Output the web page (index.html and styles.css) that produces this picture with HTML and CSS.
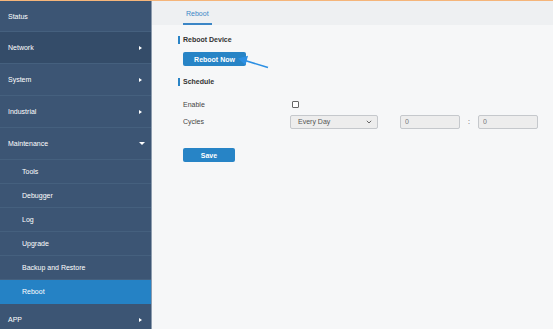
FILE: index.html
```html
<!DOCTYPE html>
<html lang="en">

<head>
    <meta charset="UTF-8">
    <link rel="stylesheet" href="styles.css">
    <title>Maintenance - Reboot</title>
</head>

<body>
    <div class="top-line"></div>

    <div class="layout">
        <aside class="sidebar">
            <ul class="menu">
                <li class="menu-item first">Status</li>
                <li class="menu-item hover has-sub">Network</li>
                <li class="menu-item has-sub">System</li>
                <li class="menu-item has-sub">Industrial</li>
                <li class="menu-item has-sub open">Maintenance</li>
                <li class="sub-item">Tools</li>
                <li class="sub-item">Debugger</li>
                <li class="sub-item">Log</li>
                <li class="sub-item">Upgrade</li>
                <li class="sub-item">Backup and Restore</li>
                <li class="sub-item active">Reboot</li>
                <li class="menu-item has-sub">APP</li>
            </ul>
        </aside>

        <main class="content">
            <div class="tabs">
                <span class="tab active">Reboot</span>
            </div>

            <div class="panel">
                <h2 class="section-title">Reboot Device</h2>
                <button class="btn" type="button">Reboot Now</button>

                <!-- callout arrow pointing at the button -->
                <svg class="callout" width="40" height="20" viewBox="0 0 40 20">
                    <line x1="36" y1="15.5" x2="13" y2="8.5" stroke="#2b8fe3" stroke-width="1.6" />
                    <polygon points="6,6.5 16,3.8 13.5,13" fill="#2b8fe3" />
                </svg>

                <h2 class="section-title schedule">Schedule</h2>

                <form class="schedule-form">
                    <div class="form-row">
                        <label for="enable">Enable</label>
                        <input type="checkbox" id="enable" class="check">
                    </div>
                    <div class="form-row">
                        <label>Cycles</label>
                        <div class="select-box">
                            <span>Every Day</span>
                            <svg width="6" height="4" viewBox="0 0 6 4">
                                <polyline points="0.8,0.8 3,3 5.2,0.8" fill="none" stroke="#666" stroke-width="1" />
                            </svg>
                        </div>
                        <input type="text" class="time-input first-input" value="0">
                        <span class="colon">:</span>
                        <input type="text" class="time-input" value="0">
                    </div>
                    <button class="btn save" type="button">Save</button>
                </form>
            </div>
        </main>
    </div>
</body>

</html>
```

FILE: styles.css
```css
html,
body {
    margin: 0;
    padding: 0;
    height: 100%;
}

body {
    font-family: "Liberation Sans", Arial, sans-serif;
    font-size: 7px;
    background-color: #f6f7f8;
    overflow: hidden;
}

.top-line {
    height: 1px;
    background-color: #f5b57a;
}

.layout {
    display: flex;
    height: 328px;
}

.sidebar {
    width: 151px;
    background-color: #3c5574;
    border-right: 1px solid #8d9cae;
    flex-shrink: 0;
}

.menu {
    list-style: none;
    margin: 0;
    padding: 0;
}

.menu-item {
    height: 32px;
    box-sizing: border-box;
    border-bottom: 1px solid #45607e;
    color: #fff;
    padding: 0 9px 0 8px;
    display: flex;
    align-items: center;
    justify-content: space-between;
}

.menu-item.first {
    height: 31px;
}

.menu-item.hover {
    background-color: #344c69;
}

.has-sub::after {
    content: "";
    width: 0;
    height: 0;
    border-top: 2.5px solid transparent;
    border-bottom: 2.5px solid transparent;
    border-left: 3px solid #fff;
}

.has-sub.open::after {
    border-left: 3px solid transparent;
    border-right: 3px solid transparent;
    border-top: 3px solid #fff;
    border-bottom: none;
    margin-right: -3px;
}

.sub-item {
    height: 24px;
    box-sizing: border-box;
    border-bottom: 1px solid #45607e;
    color: #fff;
    padding-left: 22px;
    display: flex;
    align-items: center;
}

.sub-item.active {
    background-color: #2582c5;
    border-bottom-color: #2582c5;
}

.content {
    flex: 1;
    display: flex;
    flex-direction: column;
}

.tabs {
    height: 24px;
    background-color: #eef0f2;
    display: flex;
    padding-left: 31px;
}

.tab {
    color: #3b86c6;
    padding: 0 3px;
    display: flex;
    align-items: center;
    border-bottom: 2px solid transparent;
    padding-top: 2px;
}

.tab.active {
    border-bottom-color: #3b86c6;
}

.panel {
    position: relative;
    padding: 11px 0 0 26px;
}

.section-title {
    margin: 0;
    font-size: 7px;
    line-height: 8px;
    font-weight: bold;
    color: #333;
    border-left: 2px solid #2a84c6;
    padding-left: 3px;
}

.section-title.schedule {
    margin-top: 12px;
}

.btn {
    display: block;
    font-family: inherit;
    font-size: 7px;
    font-weight: bold;
    color: #fff;
    background-color: #2784c6;
    border: none;
    border-radius: 2px;
    height: 14px;
    width: 63px;
    padding: 0;
    margin: 8px 0 0 5px;
}

.callout {
    position: absolute;
    left: 80px;
    top: 27px;
}

.schedule-form {
    margin: 10px 0 0 5px;
}

.form-row {
    height: 17px;
    display: flex;
    align-items: center;
}

.form-row label {
    width: 107px;
    color: #444;
}

.check {
    appearance: none;
    width: 7px;
    height: 7px;
    margin: 0 0 0 2px;
    border: 1px solid #666;
    border-radius: 1px;
    background-color: #fff;
}

.select-box {
    width: 88px;
    height: 14px;
    box-sizing: border-box;
    border: 1px solid #c5c8cc;
    border-radius: 2px;
    background-color: #ededed;
    color: #555;
    display: flex;
    align-items: center;
    justify-content: space-between;
    padding: 0 5px 0 7px;
}

.time-input {
    width: 60px;
    height: 14px;
    box-sizing: border-box;
    border: 1px solid #c5c8cc;
    border-radius: 2px;
    background-color: #ededed;
    color: #777;
    font-family: inherit;
    font-size: 7px;
    padding: 0 4px;
    margin: 0;
}

.first-input {
    margin-left: 22px;
}

.colon {
    width: 18px;
    text-align: center;
    color: #444;
}

.btn.save {
    width: 52px;
    margin: 18px 0 0 0;
}
```
